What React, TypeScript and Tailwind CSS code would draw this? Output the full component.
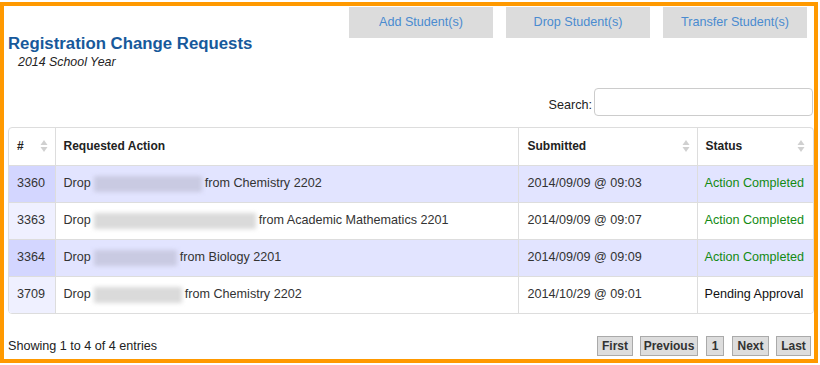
import React from 'react';

interface Request {
  id: number;
  blur: number;
  course: string;
  submitted: string;
  status: string;
}

const requests: Request[] = [
  { id: 3360, blur: 108, course: 'Chemistry 2202', submitted: '2014/09/09 @ 09:03', status: 'Action Completed' },
  { id: 3363, blur: 162, course: 'Academic Mathematics 2201', submitted: '2014/09/09 @ 09:07', status: 'Action Completed' },
  { id: 3364, blur: 83, course: 'Biology 2201', submitted: '2014/09/09 @ 09:09', status: 'Action Completed' },
  { id: 3709, blur: 88, course: 'Chemistry 2202', submitted: '2014/10/29 @ 09:01', status: 'Pending Approval' },
];

const SortIcon = () => (
  <svg width="8" height="14" viewBox="0 0 8 14" className="shrink-0">
    <path d="M4 1 L7.5 6 H0.5 Z" fill="#d0d0d0" />
    <path d="M4 13 L7.5 8 H0.5 Z" fill="#d0d0d0" />
  </svg>
);

const App = () => {
  return (
    <div className="w-[820px] h-[365px] bg-white pt-[2px] font-['Liberation_Sans',Arial,sans-serif] text-[12.6px] text-[#333]">
      <div className="w-[818px] h-[361px] border-4 border-[#ff9900] pl-[4px] pr-[1px]">
        {/* header */}
        <div className="flex justify-between items-start">
          <div className="pt-[29px]">
            <h1 className="text-[16.8px] leading-[18px] font-bold text-[#17599b]">Registration Change Requests</h1>
            <p className="mt-[2px] ml-[10px] italic text-[12.4px] leading-[14px] text-[#222]">2014 School Year</p>
          </div>
          <div className="flex gap-[13px] mt-[1px] mr-[6px]">
            {['Add Student(s)', 'Drop Student(s)', 'Transfer Student(s)'].map((label) => (
              <button key={label} className="w-[144px] h-[31px] bg-[#dcdcdc] text-[#4a8bd0] text-[12.6px]">
                {label}
              </button>
            ))}
          </div>
        </div>

        {/* search */}
        <div className="flex justify-end items-end gap-[2px] mt-[19px]">
          <label className="leading-[14px] pb-[4px] text-[#222]">Search:</label>
          <input type="text" className="w-[219px] h-[28px] border border-[#cccccc] rounded-[4px]" />
        </div>

        {/* table */}
        <div className="mt-[11px] w-[806px] border border-[#dddddd] rounded-[4px] overflow-hidden">
          <table className="w-full border-collapse table-fixed">
            <colgroup>
              <col className="w-[46px]" />
              <col className="w-[463px]" />
              <col className="w-[179px]" />
              <col className="w-[116px]" />
            </colgroup>
            <thead>
              <tr className="h-[37px] text-[#222] text-[12px] font-bold text-left">
                <th className="pl-[8px] pr-[7px] font-bold">
                  <div className="flex justify-between items-center">#<SortIcon /></div>
                </th>
                <th className="pl-[8px] border-l border-[#dddddd] font-bold">Requested Action</th>
                <th className="pl-[9px] pr-[7px] border-l border-[#dddddd] font-bold">
                  <div className="flex justify-between items-center">Submitted<SortIcon /></div>
                </th>
                <th className="pl-[8px] pr-[8px] border-l border-[#dddddd] font-bold">
                  <div className="flex justify-between items-center">Status<SortIcon /></div>
                </th>
              </tr>
            </thead>
            <tbody>
              {requests.map((r, i) => {
                const odd = i % 2 === 0;
                return (
                  <tr key={r.id} className={`h-[37px] border-t border-[#dddddd] ${odd ? 'bg-[#e2e4ff]' : 'bg-white'}`}>
                    <td className={`pl-[8px] ${odd ? 'bg-[#d3d6ff]' : 'bg-[#eff0ff]'}`}>{r.id}</td>
                    <td className="pl-[8px] border-l border-[#dddddd] whitespace-nowrap">
                      Drop
                      <span
                        className={`inline-block align-middle h-[16px] ml-[3px] mr-[3px] blur-[2px] ${odd ? 'bg-[#c9cae2]' : 'bg-[#dadada]'}`}
                        style={{ width: r.blur }}
                      />
                      from {r.course}
                    </td>
                    <td className="pl-[9px] border-l border-[#dddddd]">{r.submitted}</td>
                    <td className={`pl-[7px] border-l border-[#dddddd] whitespace-nowrap ${r.status === 'Action Completed' ? 'text-[#138a13]' : 'text-[#111]'}`}>
                      {r.status}
                    </td>
                  </tr>
                );
              })}
            </tbody>
          </table>
        </div>

        {/* footer */}
        <div className="flex justify-between items-center mt-[22px] pr-[2px]">
          <span className="text-[#222]">Showing 1 to 4 of 4 entries</span>
          <div className="flex gap-[7px]">
            {[
              { t: 'First', w: 'w-[36px]' },
              { t: 'Previous', w: 'w-[58px] mr-[1px]' },
              { t: '1', w: 'w-[18px]' },
              { t: 'Next', w: 'w-[37px] ml-[1px]' },
              { t: 'Last', w: 'w-[35px]' },
            ].map((b) => (
              <button key={b.t} className={`${b.w} h-[20px] bg-[#dddddd] border border-[#aaaaaa] font-bold text-[#333] text-[12px] leading-[18px]`}>
                {b.t}
              </button>
            ))}
          </div>
        </div>
      </div>
    </div>
  );
};

export default App;
